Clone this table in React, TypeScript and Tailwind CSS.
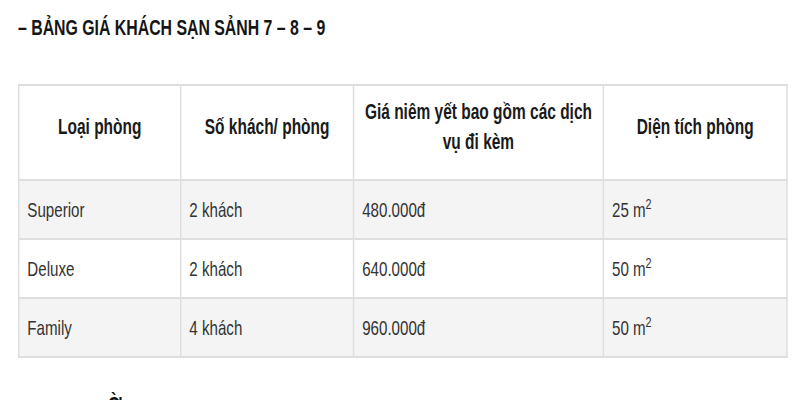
import React from 'react';

// bảng giá phòng khách sạn
interface Room {
  name: string;
  guests: string;
  price: string;
  area: string;
}

const rooms: Room[] = [
  { name: 'Superior', guests: '2 khách', price: '480.000đ', area: '25' },
  { name: 'Deluxe', guests: '2 khách', price: '640.000đ', area: '50' },
  { name: 'Family', guests: '4 khách', price: '960.000đ', area: '50' },
];

const App: React.FC = () => {
  return (
    <div className="w-[800px] h-[400px] overflow-hidden bg-white">
      <div className="w-[1111px] origin-top-left scale-x-[0.72] font-['Liberation_Sans',Arial,sans-serif]">
        <h2 className="pl-[25px] pt-[14px] text-[22px] leading-[28px] font-bold text-[#151515]">
          – BẢNG GIÁ KHÁCH SẠN SẢNH 7 – 8 – 9
        </h2>

        <table className="ml-[25px] mt-[42px] w-[1069px] table-fixed border-collapse">
          <thead>
            <tr className="bg-white">
              <th className="w-[225px] h-[95px] border-2 border-[#dedede] px-3 pb-3 text-[21.5px] leading-[30px] font-bold text-[#1a1a1a]">
                Loại phòng
              </th>
              <th className="w-[240px] border-2 border-[#dedede] px-3 pb-3 text-[21.5px] leading-[30px] font-bold text-[#1a1a1a]">
                Số khách/ phòng
              </th>
              <th className="w-[347px] border-2 border-[#dedede] px-2 pb-3 text-[21.5px] leading-[30px] font-bold text-[#1a1a1a]">
                Giá niêm yết bao gồm các dịch
                <br />
                vụ đi kèm
              </th>
              <th className="border-2 border-[#dedede] px-3 pb-3 text-[21.5px] leading-[30px] font-bold text-[#1a1a1a]">
                Diện tích phòng
              </th>
            </tr>
          </thead>
          <tbody>
            {rooms.map((room, index) => (
              <tr key={index} className={index % 2 === 0 ? 'bg-[#f4f4f4]' : 'bg-white'}>
                <td className="h-[59px] border-2 border-[#dedede] pl-[11px] text-[21px] text-[#333]">{room.name}</td>
                <td className="border-2 border-[#dedede] pl-[11px] text-[21px] text-[#333]">{room.guests}</td>
                <td className="border-2 border-[#dedede] pl-[11px] text-[21px] text-[#333]">{room.price}</td>
                <td className="border-2 border-[#dedede] pl-[11px] text-[21px] text-[#333]">
                  {room.area} m<sup className="text-[15px]">2</sup>
                </td>
              </tr>
            ))}
          </tbody>
        </table>

        <p className="pl-[150px] mt-[30px] text-[22px] font-bold text-[#111]">Ờ</p>
      </div>
    </div>
  );
};

export default App;
